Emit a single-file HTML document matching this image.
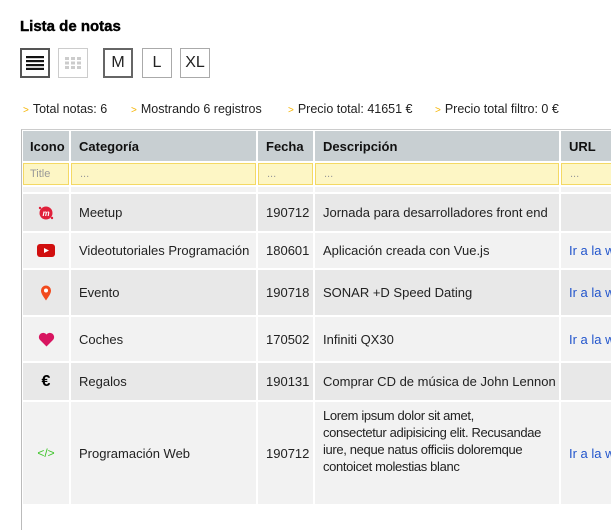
<!DOCTYPE html><html><head><meta charset="utf-8"><style>
body{margin:0;width:611px;height:459px;overflow:hidden;background:#fff;font-family:"Liberation Sans",sans-serif;font-size:13px;color:#222;position:relative}
.a{position:absolute}
.c{position:absolute;display:flex;align-items:center;padding-left:8px;box-sizing:border-box;white-space:nowrap;overflow:hidden}
.h{background:#c8cfd2;font-weight:bold;font-size:13px;color:#111}
.f{background:#fdf6c5;border:1px solid #f4d964;color:#999;font-size:11px}
.g1{background:#e8e8e8}.g2{background:#f2f2f2}
.btn{position:absolute;top:48px;width:30px;height:30px;box-sizing:border-box;border:1px solid #aaa;display:flex;align-items:center;justify-content:center;font-size:16px;color:#222}
.st{position:absolute;top:102px;font-size:12.5px}
.st b{color:#f5b400;font-weight:normal;font-size:10px;margin-right:4px}
.lk{color:#2255cc}
.ic{justify-content:center;padding:0}
</style></head><body>
<div class="a" style="left:20px;top:18px;font-weight:bold;font-size:15px;-webkit-text-stroke:0.4px #000;color:#000">Lista de notas</div>
<div class="btn" style="left:20px;border:2px solid #555"><svg width="18" height="14"><rect y="0" width="18" height="2.2" fill="#111"/><rect y="4" width="18" height="2.2" fill="#111"/><rect y="8" width="18" height="2.2" fill="#111"/><rect y="11.8" width="18" height="2.2" fill="#111"/></svg></div>
<div class="btn" style="left:58px;border-color:#ccc"><svg width="16" height="12" fill="#ccc"><rect x="0" y="0" width="4" height="3"/><rect x="6" y="0" width="4" height="3"/><rect x="12" y="0" width="4" height="3"/><rect x="0" y="4.5" width="4" height="3"/><rect x="6" y="4.5" width="4" height="3"/><rect x="12" y="4.5" width="4" height="3"/><rect x="0" y="9" width="4" height="3"/><rect x="6" y="9" width="4" height="3"/><rect x="12" y="9" width="4" height="3"/></svg></div>
<div class="btn" style="left:103px;border:2px solid #666">M</div>
<div class="btn" style="left:142px">L</div>
<div class="btn" style="left:180px">XL</div>
<div class="st" style="left:23px"><b>&gt;</b>Total notas: 6</div>
<div class="st" style="left:131px"><b>&gt;</b>Mostrando 6 registros</div>
<div class="st" style="left:288px"><b>&gt;</b>Precio total: 41651 €</div>
<div class="st" style="left:435px"><b>&gt;</b>Precio total filtro: 0 €</div>
<div class="a" style="left:21px;top:129px;width:600px;height:400px;border-left:1px solid #bbb;border-top:1px solid #ccc;background:#fff"></div>
<div class="c h" style="left:23px;top:131px;width:46px;height:30px;padding-left:7px">Icono</div>
<div class="c h" style="left:71px;top:131px;width:185px;height:30px">Categoría</div>
<div class="c h" style="left:258px;top:131px;width:55px;height:30px">Fecha</div>
<div class="c h" style="left:315px;top:131px;width:244px;height:30px">Descripción</div>
<div class="c h" style="left:561px;top:131px;width:60px;height:30px">URL</div>
<div class="c f" style="left:23px;top:163px;width:46px;height:22px;padding-left:6px">Title</div>
<div class="c f" style="left:71px;top:163px;width:185px;height:22px">...</div>
<div class="c f" style="left:258px;top:163px;width:55px;height:22px">...</div>
<div class="c f" style="left:315px;top:163px;width:244px;height:22px">...</div>
<div class="c f" style="left:561px;top:163px;width:60px;height:22px">...</div>
<div class="c g2" style="left:23px;top:187px;width:46px;height:5px"></div>
<div class="c g2" style="left:71px;top:187px;width:185px;height:5px"></div>
<div class="c g2" style="left:258px;top:187px;width:55px;height:5px"></div>
<div class="c g2" style="left:315px;top:187px;width:244px;height:5px"></div>
<div class="c g2" style="left:561px;top:187px;width:60px;height:5px"></div>
<div class="c g1 ic" style="left:23px;top:194px;width:46px;height:37px"><svg width="16" height="16"><circle cx="8" cy="8" r="6.5" fill="#e0203a"/><circle cx="2" cy="3" r="1.2" fill="#e0203a"/><circle cx="14" cy="13" r="1.2" fill="#e0203a"/><text x="4.5" y="11" font-size="8" fill="#fff" font-style="italic" font-weight="bold">m</text></svg></div>
<div class="c g1" style="left:71px;top:194px;width:185px;height:37px">Meetup</div>
<div class="c g1" style="left:258px;top:194px;width:55px;height:37px">190712</div>
<div class="c g1" style="left:315px;top:194px;width:244px;height:37px">Jornada para desarrolladores front end</div>
<div class="c g1" style="left:561px;top:194px;width:60px;height:37px"></div>
<div class="c g2 ic" style="left:23px;top:233px;width:46px;height:35px"><svg width="18" height="13"><rect width="18" height="13" rx="3" fill="#d10f0f"/><path d="M7 4l5 2.5-5 2.5z" fill="#fff"/></svg></div>
<div class="c g2" style="left:71px;top:233px;width:185px;height:35px">Videotutoriales Programación</div>
<div class="c g2" style="left:258px;top:233px;width:55px;height:35px">180601</div>
<div class="c g2" style="left:315px;top:233px;width:244px;height:35px">Aplicación creada con Vue.js</div>
<div class="c g2 lk" style="left:561px;top:233px;width:60px;height:35px">Ir a la web</div>
<div class="c g1 ic" style="left:23px;top:270px;width:46px;height:45px"><svg width="12" height="16"><path d="M6 15.5C3 11 1 8.5 1 5.5a5 5 0 0 1 10 0c0 3-2 5.5-5 10z" fill="#f24a1d"/><circle cx="6" cy="5.5" r="2" fill="#fff"/></svg></div>
<div class="c g1" style="left:71px;top:270px;width:185px;height:45px">Evento</div>
<div class="c g1" style="left:258px;top:270px;width:55px;height:45px">190718</div>
<div class="c g1" style="left:315px;top:270px;width:244px;height:45px">SONAR +D Speed Dating</div>
<div class="c g1 lk" style="left:561px;top:270px;width:60px;height:45px">Ir a la web</div>
<div class="c g2 ic" style="left:23px;top:317px;width:46px;height:44px"><svg width="17" height="15"><path d="M8.5 14.5L1.8 7.8A4.2 4.2 0 0 1 8.5 2.5a4.2 4.2 0 0 1 6.7 5.3z" fill="#d81560"/></svg></div>
<div class="c g2" style="left:71px;top:317px;width:185px;height:44px">Coches</div>
<div class="c g2" style="left:258px;top:317px;width:55px;height:44px">170502</div>
<div class="c g2" style="left:315px;top:317px;width:244px;height:44px">Infiniti QX30</div>
<div class="c g2 lk" style="left:561px;top:317px;width:60px;height:44px">Ir a la web</div>
<div class="c g1 ic" style="left:23px;top:363px;width:46px;height:37px;font-weight:bold;font-size:16px;color:#000">€</div>
<div class="c g1" style="left:71px;top:363px;width:185px;height:37px">Regalos</div>
<div class="c g1" style="left:258px;top:363px;width:55px;height:37px">190131</div>
<div class="c g1" style="left:315px;top:363px;width:244px;height:37px">Comprar CD de música de John Lennon</div>
<div class="c g1" style="left:561px;top:363px;width:60px;height:37px"></div>
<div class="c g2 ic" style="left:23px;top:402px;width:46px;height:102px;color:#3ec42a;font-size:12px">&lt;/&gt;</div>
<div class="c g2" style="left:71px;top:402px;width:185px;height:102px">Programación Web</div>
<div class="c g2" style="left:258px;top:402px;width:55px;height:102px">190712</div>
<div class="c g2" style="left:315px;top:402px;width:244px;height:102px;white-space:normal;line-height:17px;align-items:flex-start;padding-top:5px;padding-right:2px;letter-spacing:-0.35px">Lorem ipsum dolor sit amet,<br>consectetur adipisicing elit. Recusandae<br>iure, neque natus officiis doloremque<br>contoicet molestias blanc</div>
<div class="c g2 lk" style="left:561px;top:402px;width:60px;height:102px">Ir a la web</div>
</body></html>
